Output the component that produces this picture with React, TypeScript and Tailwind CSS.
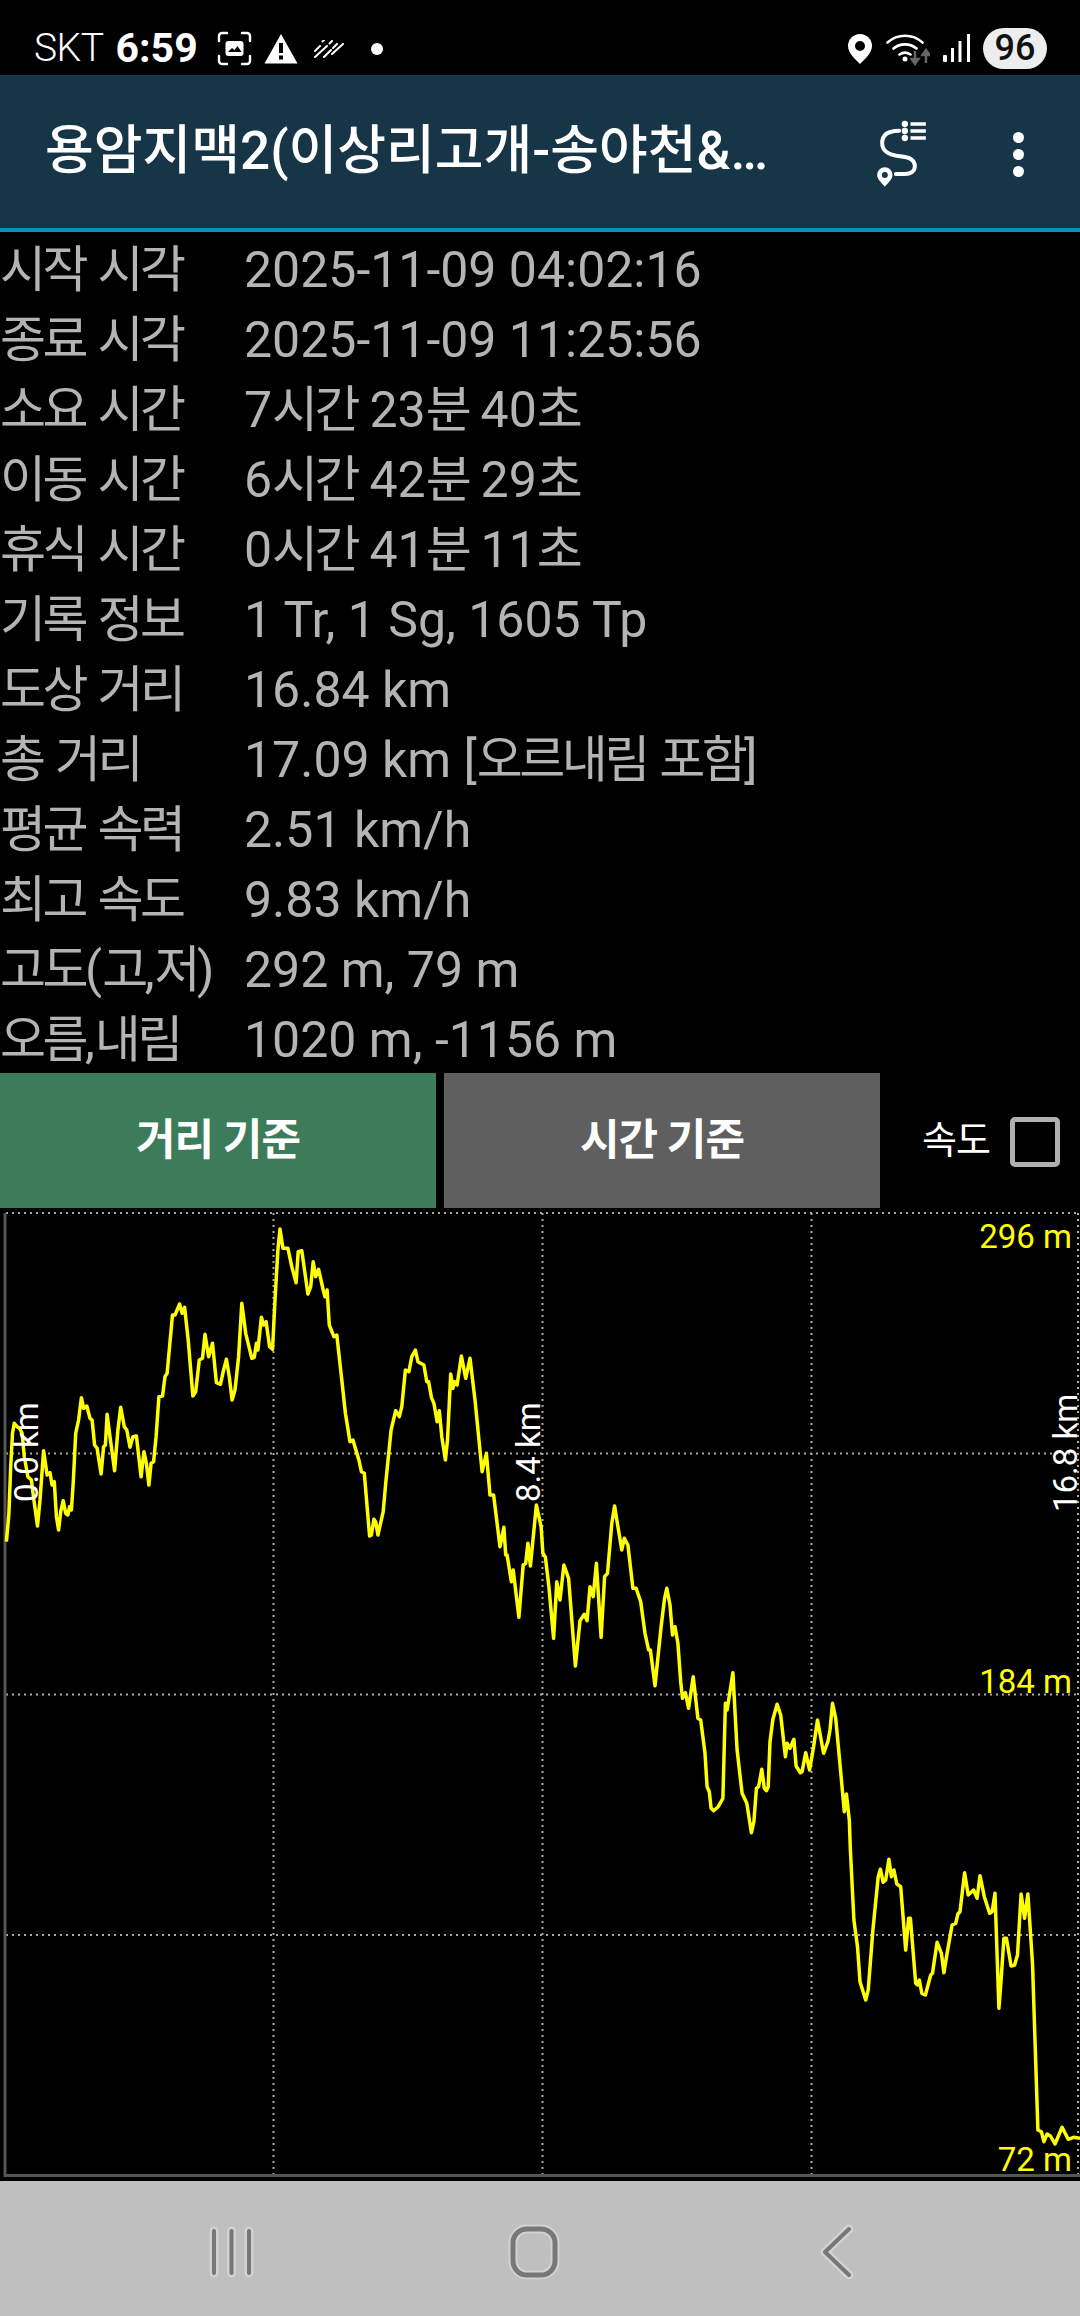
const FONT = "font-['Roboto','Noto_Sans_CJK_KR',sans-serif]";

const rows = [
  ["시작 시각", "2025-11-09 04:02:16"],
  ["종료 시각", "2025-11-09 11:25:56"],
  ["소요 시간", "7시간 23분 40초"],
  ["이동 시간", "6시간 42분 29초"],
  ["휴식 시간", "0시간 41분 11초"],
  ["기록 정보", "1 Tr, 1 Sg, 1605 Tp"],
  ["도상 거리", "16.84 km"],
  ["총 거리", "17.09 km [오르내림 포함]"],
  ["평균 속력", "2.51 km/h"],
  ["최고 속도", "9.83 km/h"],
  ["고도(고,저)", "292 m, 79 m"],
  ["오름,내림", "1020 m, -1156 m"],
];

// elevation trace, read off the reference in crop coordinates
const traceA = [[18,1025],[22,975],[25,940],[30,800],[35,700],[40,670],[48,680],[55,685],[62,700],[68,770],[78,830],[88,840],[95,900],[105,978],[112,900],[122,752],[132,825],[140,818],[146,855],[152,845],[158,950],[164,990],[170,935],[177,902],[184,940],[190,945],[195,920],[200,930],[205,850],[212,700],[220,660],[228,593],[234,625],[243,618],[252,655],[258,660],[265,735],[272,745],[283,822],[290,740],[295,735],[300,643],[308,710],[321,812],[330,690],[338,622],[348,680],[355,690],[364,742],[372,710],[382,708],[395,830],[403,755],[410,790],[417,855],[423,790],[430,785],[437,710],[445,590],[455,588],[462,530],[468,520],[483,345],[490,345],[503,312],[510,340],[517,322],[527,420],[540,588],[548,575],[558,480],[567,475],[574,403],[584,470],[595,430],[606,548],[617,553],[626,510],[634,478],[642,530],[650,600],[658,570],[668,470],[677,310],[688,400],[705,475],[712,472],[718,430],[722,450],[732,352],[738,375],[745,365],[755,440],[763,448],[770,300],[778,150],[784,87],[792,145],[806,145],[817,200],[829,248],[835,155],[845,152],[862,282],[870,260],[877,185],[884,230],[892,208],[905,270],[910,290],[916,270],[922,375],[935,410],[943,405],[957,540],[967,640],[980,725],[988,720],[1005,780],[1012,815],[1020,820],[1035,1008],[1040,1005],[1047,958],[1052,965],[1058,1005],[1073,935],[1080,850],[1095,690],[1108,632],[1118,650],[1125,620],[1135,510],[1145,515],[1153,470],[1163,450],[1170,485],[1187,495],[1195,545],[1200,545],[1208,592],[1215,610],[1224,665],[1230,632],[1237,710],[1247,780],[1253,720],[1262,522],[1268,565],[1273,545],[1280,555],[1292,468],[1304,535],[1316,475],[1330,600],[1350,815],[1362,760],[1372,885],[1382,885],[1400,1040],[1411,982],[1416,1065],[1420,1065],[1432,1145],[1437,1110],[1453,1252],[1465,1095],[1472,1090],[1478,1030],[1485,1098],[1502,915],[1515,980],[1520,1060],[1527,1072],[1537,1160],[1550,1315]];
const traceB = [[103,1145],[112,1200],[123,1095],[136,1135],[155,1398],[168,1262],[180,1243],[188,1262],[196,1160],[205,1190],[214,1090],[227,1312],[237,1130],[245,1120],[257,970],[265,918],[272,965],[285,1050],[292,1015],[302,1035],[316,1165],[325,1165],[338,1205],[350,1300],[360,1350],[365,1350],[378,1457],[395,1280],[405,1195],[411,1165],[420,1215],[427,1305],[434,1280],[442,1330]];
const traceC = [[450,5],[455,55],[463,38],[472,85],[485,-10],[498,115],[506,120],[518,220],[524,320],[530,335],[535,385],[542,392],[555,380],[568,355],[575,70],[580,90],[596,-22],[608,210],[622,340],[635,370],[648,458],[655,425],[662,325],[668,320],[677,268],[684,325],[690,332],[695,320],[700,185],[708,118],[720,73],[730,105],[743,230],[748,190],[756,205],[767,178],[773,258],[785,278],[790,275],[800,218],[811,270],[822,200],[833,120],[850,220],[862,185],[868,150],[875,70],[884,115],[895,240],[908,395],[914,342],[922,420],[925,510],[935,720],[945,800],[952,905],[968,960],[975,930],[988,750],[1003,590],[1009,568],[1017,607],[1024,600],[1033,538],[1040,590],[1047,570],[1055,612],[1066,620],[1080,810],[1088,715],[1093,715],[1108,910],[1113,915],[1118,900],[1125,940],[1135,945],[1150,885],[1155,880],[1168,787],[1180,820],[1187,878],[1195,825],[1210,735],[1220,730],[1226,702],[1232,695],[1245,578],[1255,645],[1270,630],[1280,655],[1288,587],[1300,650],[1315,700],[1322,695],[1330,640],[1341,985],[1347,900],[1355,775],[1362,775],[1375,858],[1385,855],[1393,825],[1403,642],[1413,715],[1422,642],[1435,850],[1450,1350],[1460,1355],[1467,1385],[1476,1362],[1485,1368],[1498,1392],[1518,1342],[1535,1378],[1550,1372],[1568,1375]];

const CHART_TOP = 1210;
const toPoints = (pts: number[][], ox: number, oy: number) =>
  pts.map(([x, y]) => `${(ox + x / 2.8).toFixed(1)},${(oy + y / 3 - CHART_TOP).toFixed(1)}`).join(" ");
const elevation = [toPoints(traceA, 0, 1200), toPoints(traceB, 520, 1200), toPoints(traceC, 520, 1680)].join(" ");

// the hangul in the reference runs narrower than the Latin text beside it
function Tight({ text }: { text: string }) {
  return (
    <>
      {text.split(/([가-힣]+)/).map((part, i) =>
        i % 2 ? (
          <span key={i} className="tracking-[-3.5px]">{part}</span>
        ) : (
          <span key={i}>{part}</span>
        ),
      )}
    </>
  );
}

function StatusBar() {
  return (
    <div className="h-[75px] pt-[22px] bg-black flex items-center text-white relative shrink-0">
      <span className="ml-[34px] text-[39px] font-light tracking-[-0.5px] leading-none">SKT</span>
      <span className="ml-[12px] text-[41px] font-bold leading-none">6:59</span>
      <svg className="ml-[19px]" width="35" height="35" viewBox="0 0 35 35" fill="none">
        <path d="M2 10V5a3 3 0 0 1 3-3h5M25 2h5a3 3 0 0 1 3 3v5M33 25v5a3 3 0 0 1-3 3h-5M10 33H5a3 3 0 0 1-3-3v-5" stroke="#fff" strokeWidth="2.4" strokeLinecap="round" />
        <rect x="8.5" y="10" width="18" height="15" rx="3" fill="#fff" />
        <path d="M11 21l4-4 2.5 2 3-4 4 6z" fill="#000" />
      </svg>
      <svg className="ml-[12px]" width="34" height="31" viewBox="0 0 34 31">
        <path d="M17 1l16.5 29.5H.5z" fill="#fff" />
        <rect x="15" y="10" width="4" height="10" fill="#000" />
        <rect x="15" y="22.500" width="4" height="4" fill="#000" />
      </svg>
      <svg className="ml-[16px]" width="30" height="18" viewBox="0 0 30 18" fill="none" stroke="#fff" strokeWidth="2" strokeLinecap="round">
        <path d="M1 11l5-5M8.500 1.500L10 0M1 17l12-11M15.500 3.500L18 1M10 17l7-7M19 8l4-4M18 14l11-10" />
      </svg>
      <div className="ml-[27px] w-[12px] h-[12px] rounded-full bg-white" />
      <div className="ml-auto flex items-center">
        <svg width="24" height="30" viewBox="0 0 24 30">
          <path fillRule="evenodd" d="M12 0a12 12 0 0 1 12 12c0 7-7 13-12 18C7 25 0 19 0 12A12 12 0 0 1 12 0zm0 7a5 5 0 1 0 0 10 5 5 0 0 0 0-10z" fill="#fff" />
        </svg>
        <svg className="ml-[14px]" width="44" height="34" viewBox="0 0 44 34" fill="none">
          <path d="M1.500 10.500a26 26 0 0 1 35 0M7.500 16.500a18 18 0 0 1 23 0M13.500 22.500a10 10 0 0 1 11 0" stroke="#fff" strokeWidth="2.600" strokeLinecap="round" />
          <circle cx="19" cy="27" r="2.500" fill="#fff" />
          <path d="M29 19v11M25.500 27l3.500 5 3.500-5z" stroke="#666" strokeWidth="2.400" fill="#666" />
          <path d="M40 31V21M36.500 23l3.500-5 3.500 5z" stroke="#666" strokeWidth="2.400" fill="#666" />
        </svg>
        <svg className="ml-[13px]" width="28" height="29" viewBox="0 0 28 29" fill="#fff">
          <rect x="0" y="21" width="4" height="7" rx="1" />
          <rect x="8" y="14" width="3" height="14" />
          <rect x="15.500" y="7" width="3" height="21" />
          <rect x="24" y="0" width="3" height="28" />
        </svg>
        <div className="ml-[12px] mr-[33px] w-[64px] h-[41px] rounded-full bg-[#ededed] text-[#111] text-[36px] font-medium leading-[41px] text-center">96</div>
      </div>
    </div>
  );
}

function Header() {
  return (
    <div className="h-[157px] bg-[#163547] border-b-[4px] border-[#0f8dbf] flex items-center shrink-0">
      <h1 className="ml-[45px] w-[723px] shrink-0 text-white text-[53px] font-medium whitespace-nowrap leading-none">
        용암지맥2(이상리고개-송야천&…
      </h1>
      <svg className="ml-[105px] mt-[3px]" width="57" height="70" viewBox="340 355 170 210" fill="none">
        <path d="M418 393C385 393 367 405 367 430C367 460 395 467 420 470C450 473 465 480 465 500C465 515 452 523 435 523H408" stroke="#fff" strokeWidth="12" strokeLinecap="round" />
        <circle cx="435" cy="373" r="9.500" fill="#fff" />
        <circle cx="435" cy="394" r="9.500" fill="#fff" />
        <circle cx="435" cy="415" r="9.500" fill="#fff" />
        <path d="M452 373h46M452 394h46M452 415h46" stroke="#fff" strokeWidth="11" />
        <path fillRule="evenodd" d="M375 503a23 23 0 0 1 23 23c0 13-14 24-23 35c-9-11-23-22-23-35a23 23 0 0 1 23-23zm0 14a9 9 0 1 0 0 18 9 9 0 0 0 0-18z" fill="#fff" />
      </svg>
      <div className="ml-[83px] mt-[5px] flex flex-col gap-[6px]">
        <div className="w-[11px] h-[11px] rounded-full bg-white" />
        <div className="w-[11px] h-[11px] rounded-full bg-white" />
        <div className="w-[11px] h-[11px] rounded-full bg-white" />
      </div>
    </div>
  );
}

function TrackInfo() {
  return (
    <div className="pt-[1px] shrink-0">
      {rows.map(([label, value]) => (
        <div key={label} className="h-[70px] pt-[3px] flex items-center text-[#b4b4b4] text-[50px] leading-none whitespace-nowrap">
          <span className="w-[244px]"><Tight text={label} /></span>
          <span><Tight text={value} /></span>
        </div>
      ))}
    </div>
  );
}

function Controls() {
  return (
    <div className="h-[135px] flex items-stretch shrink-0">
      <button className="w-[436px] bg-[#3c7c5a] text-white text-[43px] font-bold tracking-[-1px]">거리 기준</button>
      <button className="ml-[8px] w-[436px] bg-[#5f5f5f] text-white text-[43px] font-bold tracking-[-1px]">시간 기준</button>
      <div className="flex-1 flex items-center">
        <span className="ml-[42px] text-white text-[38px] tracking-[-1px]">속도</span>
        <div className="ml-[20px] mt-[2px] w-[50px] h-[50px] rounded-[5px] border-[5px] border-[#b0b0b0]" />
      </div>
    </div>
  );
}

function ElevationChart() {
  const dots = { stroke: "#aaaaaa", strokeWidth: 2, strokeDasharray: "2 4" };
  const y = (v: number) => v - CHART_TOP;
  return (
    <svg className="block shrink-0" width="1080" height="971" viewBox="0 0 1080 971">
      {[1213, 1453.5, 1694.500, 1935].map((v) => (
        <line key={v} x1="6" x2="1080" y1={y(v)} y2={y(v)} {...dots} />
      ))}
      {[273.500, 542.500, 811.500, 1078].map((v) => (
        <line key={v} x1={v} x2={v} y1={y(1213)} y2={y(2176)} {...dots} />
      ))}
      <path d={`M5 ${y(1213)}V${y(2175.500)}H1080`} fill="none" stroke="#555" strokeWidth="3" />
      <polyline points={elevation} fill="none" stroke="#ffff00" strokeWidth="3.5" strokeLinejoin="round" />
      <g fontFamily="Roboto" fontSize="33" fill="#ffff00" textAnchor="end">
        <text x="1072" y={y(1248)}>296 m</text>
        <text x="1072" y={y(1693)}>184 m</text>
        <text x="1072" y={y(2171)}>72 m</text>
      </g>
      <g fontFamily="Roboto" fontSize="33" fill="#fff">
        <text transform={`translate(38 ${y(1502)}) rotate(-90)`}>0.0 km</text>
        <text transform={`translate(540 ${y(1502)}) rotate(-90)`}>8.4 km</text>
        <text transform={`translate(1077 ${y(1512)}) rotate(-90)`}>16.8 km</text>
      </g>
    </svg>
  );
}

function NavBar() {
  return (
    <div className="flex-1 bg-[#bfbfbf] flex items-center justify-center">
      <svg width="1080" height="135" viewBox="0 2181 1080 135" fill="none" strokeLinecap="round" strokeLinejoin="round">
        <g stroke="#d2d2d2" strokeWidth="9">
          <path d="M214 2231v42M231.500 2231v42M249 2231v42" />
          <rect x="513" y="2229" width="42" height="46" rx="14" />
          <path d="M849 2229l-24 23 24 23" />
        </g>
        <g stroke="#777">
          <path d="M214 2231v42M231.500 2231v42M249 2231v42" strokeWidth="4" />
          <rect x="513" y="2229" width="42" height="46" rx="14" strokeWidth="5" />
          <path d="M849 2229l-24 23 24 23" strokeWidth="4" />
        </g>
      </svg>
    </div>
  );
}

export default function App() {
  return (
    <div className={`w-[1080px] h-[2316px] bg-black flex flex-col overflow-hidden ${FONT}`}>
      <StatusBar />
      <Header />
      <TrackInfo />
      <Controls />
      <div className="h-[2px] shrink-0" />
      <ElevationChart />
      <NavBar />
    </div>
  );
}
